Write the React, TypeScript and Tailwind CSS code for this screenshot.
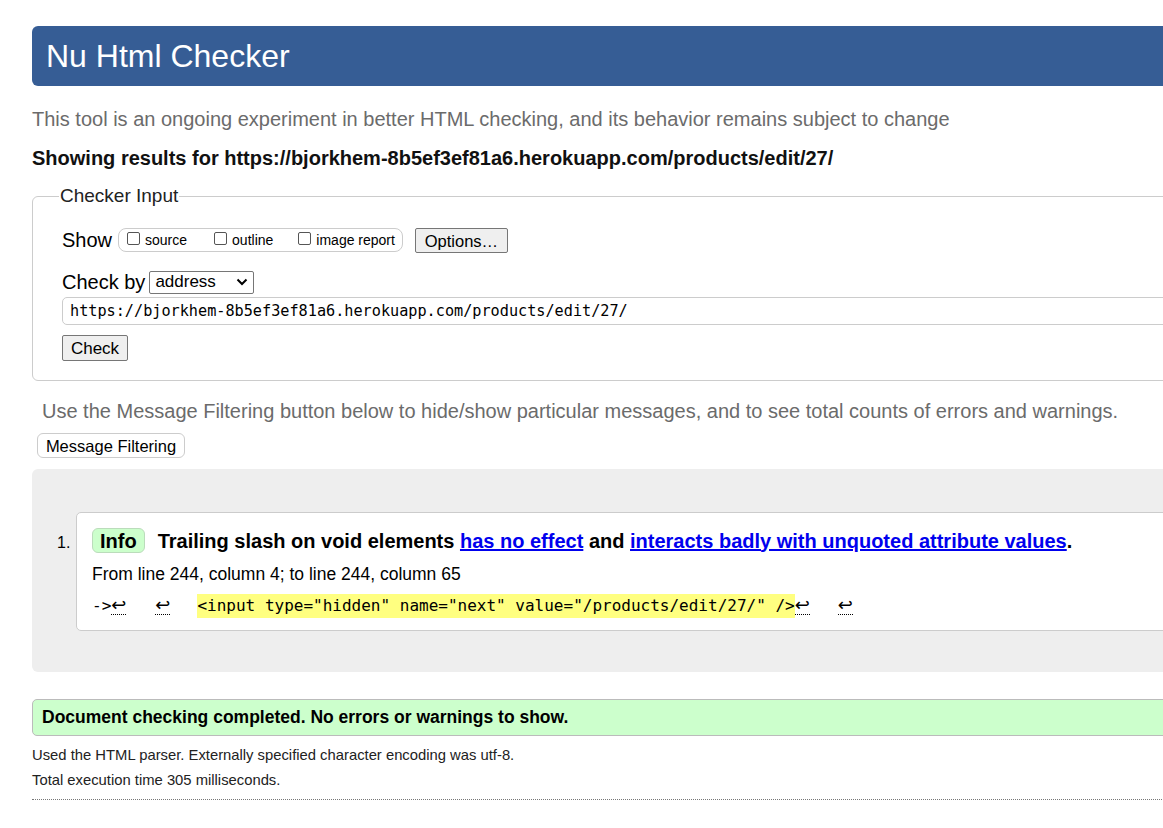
import React from "react";

const sans = { fontFamily: '"Liberation Sans", Arial, sans-serif' };

function Ret() {
  return (
    <span className="border-b border-dotted border-black text-[18px] leading-[18px] inline-block" style={{ fontFamily: '"DejaVu Sans", sans-serif' }}>
      ↩
    </span>
  );
}

export default function App() {
  return (
    <div className="w-[1163px] h-[828px] overflow-hidden bg-white text-black" style={sans}>
      <div className="pl-8 pt-[26px]">
        <div className="w-[1200px] h-[60px] bg-[#365d95] rounded-l-md flex items-center pl-[14px]">
          <h1 className="text-[32px] text-white leading-none">Nu Html Checker</h1>
        </div>
        <p className="mt-[21px] text-[20px] text-[#6b6b6b] leading-6">
          This tool is an ongoing experiment in better HTML checking, and its behavior remains subject to change
        </p>
        <p className="mt-[15px] text-[20px] font-bold leading-6 text-[#111]">
          Showing results for https://bjorkhem-8b5ef3ef81a6.herokuapp.com/products/edit/27/
        </p>
        <fieldset className="mt-[14px] w-[1200px] border border-[#ccc] rounded-l-md pl-[29px] pb-[19px] pt-[6px]">
          <legend className="text-[19px] px-[1px] -ml-[3px] leading-6 text-[#222]">Checker Input</legend>
          <div className="flex items-center h-[28px] mt-[12px]">
            <span className="text-[20px] mr-[6px]">Show</span>
            <div className="flex items-center h-[24px] border border-[#ccc] rounded-[8px] pl-[8px] pr-[7px] text-[14px]">
              <label className="flex items-center mr-[27px]"><span className="inline-block w-[13px] h-[13px] border border-[#555] rounded-[2px] mr-[5px] -mt-[4px]" />source</label>
              <label className="flex items-center mr-[25px]"><span className="inline-block w-[13px] h-[13px] border border-[#555] rounded-[2px] mr-[5px] -mt-[4px]" />outline</label>
              <label className="flex items-center"><span className="inline-block w-[13px] h-[13px] border border-[#555] rounded-[2px] mr-[5px] -mt-[4px]" />image report</label>
            </div>
            <button className="ml-[12px] h-[25px] w-[93px] border border-[#767676] bg-[#efefef] rounded-[2px] text-[16.5px]">Options…</button>
          </div>
          <div className="flex items-center h-[28px] mt-[14px]">
            <span className="text-[20px] mr-[4px]">Check by</span>
            <div className="h-[23px] w-[105px] border border-[#767676] rounded-[2px] flex items-center justify-between pl-[5px] pr-[5px] text-[17px]">
              <span>address</span>
              <svg width="12" height="8" viewBox="0 0 12 8"><path d="M1.5 1.5 L6 6 L10.5 1.5" fill="none" stroke="#000" strokeWidth="2" /></svg>
            </div>
          </div>
          <div className="mt-[1px] h-[28px] border border-[#ccc] rounded-l-[5px] flex items-center pl-[7px] text-[15.2px]" style={{ fontFamily: '"DejaVu Sans Mono", monospace' }}>
            https://bjorkhem-8b5ef3ef81a6.herokuapp.com/products/edit/27/
          </div>
          <button className="mt-[10px] h-[26px] w-[66px] border border-[#767676] bg-[#efefef] rounded-[2px] text-[17px]">Check</button>
        </fieldset>
        <p className="mt-[18px] ml-[10px] text-[20px] text-[#6b6b6b] leading-6">
          Use the Message Filtering button below to hide/show particular messages, and to see total counts of errors and warnings.
        </p>
        <button className="mt-[10px] ml-[5px] h-[25px] w-[148px] border border-[#ccc] bg-white rounded-[6px] text-[16.5px]">Message Filtering</button>
        <div className="mt-[10px] w-[1200px] h-[203px] bg-[#eeeeee] rounded-l-[6px] pt-[43px] pl-[25px] flex">
          <span className="text-[16px] mt-[19px] w-[19px]">1.</span>
          <div className="flex-1 bg-white border border-[#ccc] rounded-l-[5px] h-[119px] pl-[15px] pt-[15px]">
            <div className="flex items-center text-[20px] font-bold leading-6">
              <span className="bg-[#ccffcc] border border-[#bbdcbb] rounded-[6px] px-[7px] h-[25px] flex items-center mr-[13px]">Info</span>
              <span>
                Trailing slash on void elements{" "}
                <a className="text-[#0000ee] underline">has no effect</a> and{" "}
                <a className="text-[#0000ee] underline">interacts badly with unquoted attribute values</a>.
              </span>
            </div>
            <div className="mt-[9px] text-[17.5px] leading-6">From line 244, column 4; to line 244, column 65</div>
            <div className="mt-[8px] text-[16px] leading-6 flex items-baseline" style={{ fontFamily: '"DejaVu Sans Mono", monospace' }}>
              <span>-&gt;</span><Ret />
              <span className="ml-[29px]"><Ret /></span>
              <span className="ml-[27px] bg-[#ffff80] whitespace-pre">{'<input type="hidden" name="next" value="/products/edit/27/" />'}</span>
              <Ret />
              <span className="ml-[28px]"><Ret /></span>
            </div>
          </div>
        </div>
        <div className="mt-[27px] w-[1200px] h-[37px] bg-[#ccffcc] border border-[#bbb] rounded-l-[5px] flex items-center pl-[9px] text-[17.5px] font-bold">
          Document checking completed. No errors or warnings to show.
        </div>
        <p className="mt-[9px] text-[14.8px] leading-5 text-[#222]">Used the HTML parser. Externally specified character encoding was utf-8.</p>
        <p className="mt-[5px] text-[14.8px] leading-5 text-[#222]">Total execution time 305 milliseconds.</p>
        <div className="mt-[9px] w-[1200px] border-t border-dotted border-[#777]" />
      </div>
    </div>
  );
}
